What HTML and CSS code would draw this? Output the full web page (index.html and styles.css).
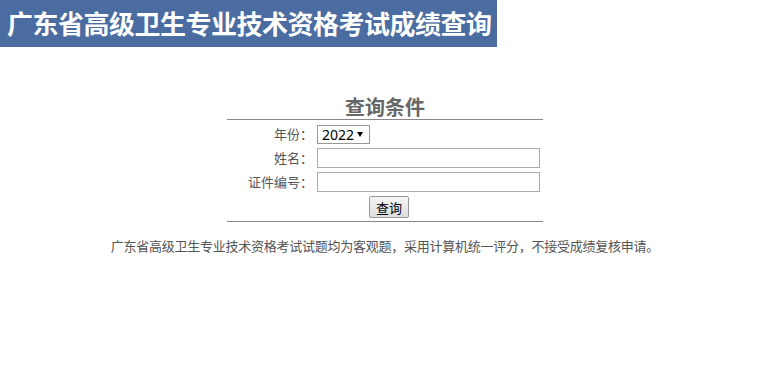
FILE: index.html
```html
<!DOCTYPE html>
<html lang="zh-CN">
<head>
  <meta charset="UTF-8" />
  <meta name="viewport" content="width=device-width, initial-scale=1.0"/>
  <title>广东省高级卫生专业技术资格考试成绩查询</title>
  <link rel="stylesheet" href="styles.css">
</head>
<body>

  <!-- Header -->
  <header class="top">
    <h1>广东省高级卫生专业技术资格考试成绩查询</h1>
  </header>

  <!-- Query form -->
  <div class="query">
    <h2>查询条件</h2>
    <form class="query-form" onsubmit="return false;">
      <label for="year">年份：</label>
      <div class="field">
        <span class="select-wrap">
          <select id="year">
            <option>2022</option>
            <option>2021</option>
            <option>2020</option>
          </select>
        </span>
      </div>

      <label for="name">姓名：</label>
      <div class="field"><input type="text" id="name" /></div>

      <label for="idno">证件编号：</label>
      <div class="field"><input type="text" id="idno" /></div>

      <div class="actions">
        <button type="submit">查询</button>
      </div>
    </form>
  </div>

  <p class="note">广东省高级卫生专业技术资格考试试题均为客观题，采用计算机统一评分，不接受成绩复核申请。</p>

</body>
</html>
```

FILE: styles.css
```css
* {
  margin: 0;
  padding: 0;
  box-sizing: border-box;
}

body {
  background: #fff;
  color: #555;
  font-family: "Noto Sans CJK SC", "Noto Sans", sans-serif;
  font-size: 13px;
}

/* Header */
.top {
  display: inline-block;
  background: #4a6ca1;
  height: 47px;
  padding: 0 5px 0 7px;
}

.top h1 {
  color: #fff;
  font-size: 26px;
  font-weight: bold;
  line-height: 45px;
  letter-spacing: -0.5px;
}

/* Query box */
.query {
  width: 316px;
  margin: 48px auto 0;
  position: relative;
  left: 2px;
}

.query h2 {
  text-align: center;
  font-size: 20px;
  font-weight: bold;
  color: #666;
  line-height: 24px;
  border-bottom: 1px solid #888;
}

.query-form {
  display: grid;
  grid-template-columns: 86px 1fr;
  column-gap: 4px;
  row-gap: 4px;
  padding: 4px 0 3px;
  border-bottom: 1px solid #888;
}

.query-form label {
  text-align: right;
  line-height: 20px;
  align-self: center;
}

.field {
  display: flex;
  align-items: center;
}

.select-wrap {
  position: relative;
  display: inline-block;
}

/* dropdown arrow */
.select-wrap::after {
  content: "";
  position: absolute;
  right: 7px;
  top: 7px;
  border-left: 3.5px solid transparent;
  border-right: 3.5px solid transparent;
  border-top: 5px solid #000;
  pointer-events: none;
}

select {
  appearance: none;
  -webkit-appearance: none;
  font-family: "Noto Sans", sans-serif;
  font-size: 14px;
  line-height: 17px;
  color: #000;
  height: 19px;
  width: 53px;
  border: 1px solid #999;
  border-radius: 0;
  background: #fff;
  padding: 0 0 0 4px;
}

input {
  width: 223px;
  height: 20px;
  border: 1px solid #aaa;
  background: #fff;
}

.actions {
  grid-column: 1 / 3;
  display: flex;
  justify-content: center;
  padding-left: 8px;
}

button {
  font-family: "Noto Sans CJK SC", sans-serif;
  font-size: 13px;
  color: #000;
  width: 40px;
  height: 22px;
  border: 1px solid #999;
  border-radius: 2px;
  background: linear-gradient(#f6f6f6, #dedede);
  cursor: pointer;
}

.note {
  text-align: center;
  margin-top: 14px;
  padding-left: 4px;
  color: #555;
  letter-spacing: -0.25px;
}
```
